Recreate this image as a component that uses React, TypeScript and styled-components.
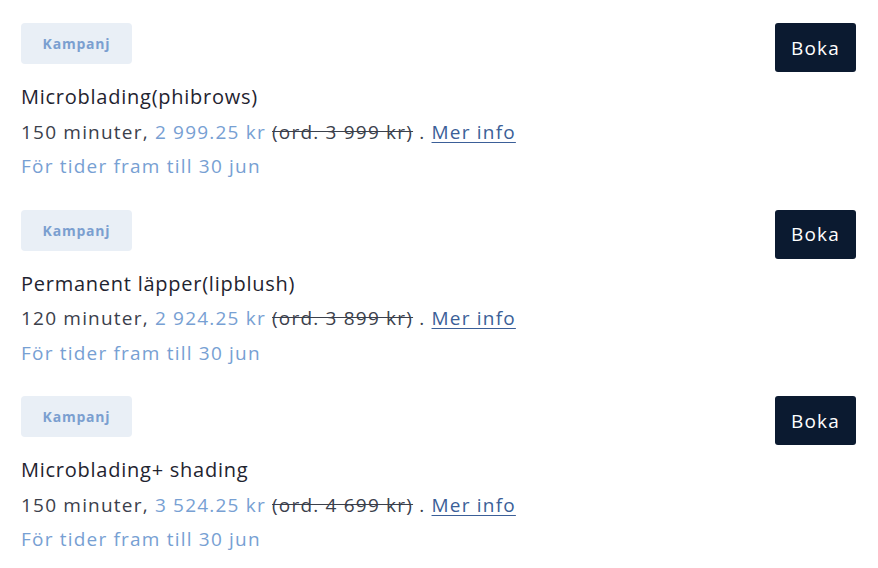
import React from "react";
import styled, { createGlobalStyle } from "styled-components";

const Global = createGlobalStyle`
  html, body { margin: 0; padding: 0; background: #ffffff; }
  body { font-family: "Open Sans", "Lato", sans-serif; }
`;

const Page = styled.div`
  padding: 23px 22px 0 21px;
  display: flex;
  flex-direction: column;
  gap: 26px;
`;

const Item = styled.div`
  display: flex;
  justify-content: space-between;
  align-items: flex-start;
`;

const Info = styled.div`
  display: flex;
  flex-direction: column;
  align-items: flex-start;
`;

const Badge = styled.div`
  width: 111px;
  height: 41px;
  box-sizing: border-box;
  display: flex;
  align-items: center;
  justify-content: center;
  background: #e9eff6;
  border-radius: 4px;
  color: #7b9fd0;
  font-size: 14px;
  font-weight: 700;
  letter-spacing: 0.8px;
  margin-bottom: 16px;
`;

const Title = styled.div`
  font-size: 20px;
  font-weight: 500;
  line-height: 34.5px;
  letter-spacing: 0.75px;
  white-space: nowrap;
  color: #1f2430;
`;

const Line = styled.div<{ $tone?: "gray" | "blue" }>`
  font-size: 19px;
  line-height: 34.5px;
  white-space: nowrap;
  letter-spacing: 1.2px;
  color: ${(p) => (p.$tone === "blue" ? "#77a0d3" : "#3b404b")};
`;

const Price = styled.span`
  color: #77a0d3;
`;

const Old = styled.span`
  color: #3b404b;
  text-decoration: line-through;
`;

const MoreLink = styled.a`
  color: #3b5f98;
  text-decoration: underline;
  text-underline-offset: 3px;
`;

const Button = styled.button`
  width: 81px;
  height: 49px;
  border: none;
  border-radius: 3px;
  background: #0b1a30;
  color: #ffffff;
  font-family: inherit;
  font-size: 19px;
  letter-spacing: 1.2px;
  padding: 0;
  cursor: pointer;
`;

const items = [
  { title: "Microblading(phibrows)", mins: 150, price: "2 999.25 kr", old: "(ord. 3 999 kr)" },
  { title: "Permanent läpper(lipblush)", mins: 120, price: "2 924.25 kr", old: "(ord. 3 899 kr)" },
  { title: "Microblading+ shading", mins: 150, price: "3 524.25 kr", old: "(ord. 4 699 kr)" },
];

export default function App() {
  return (
    <>
      <Global />
      <Page>
        {items.map((it) => (
          <Item key={it.title}>
            <Info>
              <Badge>Kampanj</Badge>
              <Title>{it.title}</Title>
              <Line $tone="gray">
                {it.mins} minuter, <Price>{it.price}</Price> <Old>{it.old}</Old> .{" "}
                <MoreLink href="#">Mer info</MoreLink>
              </Line>
              <Line $tone="blue">För tider fram till 30 jun</Line>
            </Info>
            <Button>Boka</Button>
          </Item>
        ))}
      </Page>
    </>
  );
}
